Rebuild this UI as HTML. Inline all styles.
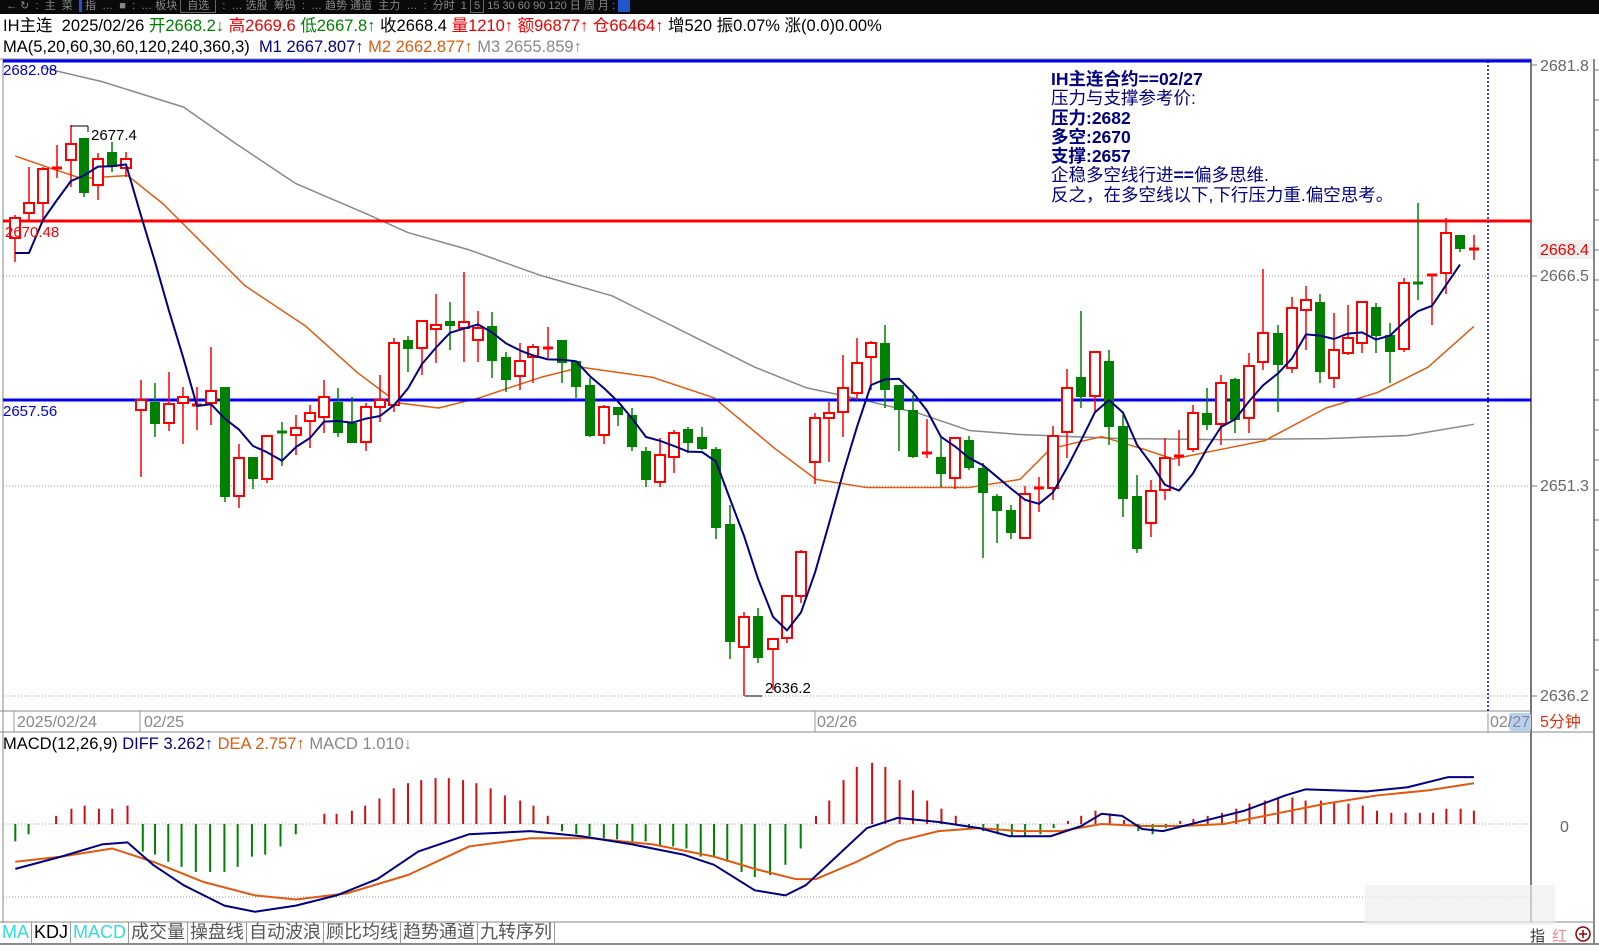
<!DOCTYPE html>
<html><head><meta charset="utf-8"><style>
*{margin:0;padding:0}
body{width:1599px;height:950px;background:#fff;overflow:hidden;position:relative;font-family:"Liberation Sans","Noto Sans CJK SC",sans-serif}
.t{position:absolute;white-space:nowrap;font-size:16.5px;line-height:19px}
#top{position:absolute;left:0;top:0;width:1599px;height:14px;background:#0a0a0a;color:#888;font-size:11px;line-height:12px;overflow:hidden}
.tabs{position:absolute;left:0;top:922px;height:21px;display:flex;font-size:18px;line-height:21px;font-family:"Liberation Sans","Noto Sans CJK SC",sans-serif}
.tabs div{border-right:1px solid #999;padding:0 2px;color:#555;height:21px}
</style></head><body>
<div id="top">&nbsp;&nbsp;← ↻ &nbsp;: &nbsp;主 &nbsp;菜 &nbsp;<span style="background:#2255cc;color:#fff">&nbsp;</span> 指 &nbsp;… &nbsp;■ &nbsp;: &nbsp;… 板块 <span style="border:1px solid #666;padding:0 6px">自选</span> &nbsp;: &nbsp;… 选股 &nbsp;筹码 &nbsp;: &nbsp;… 趋势 通道 &nbsp;主力 &nbsp;… &nbsp;: &nbsp;分时 &nbsp;1 <span style="border:1px solid #666">&nbsp;5&nbsp;</span> 15 30 60 90 120 日 周 月 : <span style="background:#2255cc">&nbsp;&nbsp;&nbsp;&nbsp;</span></div>
<div class="t" style="left:3px;top:17px">IH主连 &nbsp;2025/02/26 <span style="color:#008000">开2668.2↓</span> <span style="color:#e00">高2669.6</span> <span style="color:#008000">低2667.8↑</span> 收2668.4 <span style="color:#e00">量1210↑ 额96877↑ 仓66464↑</span> 增520 振0.07% 涨(0.0)0.00%</div>
<div class="t" style="left:3px;top:38px">MA(5,20,60,30,60,120,240,360,3) &nbsp;<span style="color:#000080">M1 2667.807↑</span> <span style="color:#e05a10">M2 2662.877↑</span> <span style="color:#888">M3 2655.859↑</span></div>
<div class="t" style="left:1051px;top:70px;color:#000080;font-size:17.5px;line-height:19.3px;font-weight:bold;font-family:'Liberation Sans','Noto Sans CJK SC',sans-serif">
<span>IH主连合约==02/27</span><br><span style="font-weight:normal">压力与支撑参考价:</span><br>压力:2682<br>多空:2670<br>支撑:2657<br><span style="font-weight:normal">企稳多空线行进</span>==<span style="font-weight:normal">偏多思维.</span><br><span style="font-weight:normal">反之，在多空线以下,下行压力重.偏空思考。</span></div>
<svg id="s" width="1599" height="950" style="position:absolute;left:0;top:0" xmlns="http://www.w3.org/2000/svg"></svg>
<div class="tabs"><div style="color:#3dd">MA</div><div style="color:#000">KDJ</div><div style="color:#3dd">MACD</div><div>成交量</div><div>操盘线</div><div>自动波浪</div><div>顾比均线</div><div>趋势通道</div><div>九转序列</div></div>
<script>
var C=[[15,218,238,215,262,'r'],[29,203,213,167,220,'r'],[43,169,203,167,220,'r'],[57,168,168,145,178,'r'],[71,144,160,125,187,'r'],[84,138,193,138,197,'g'],[98,159,185,153,200,'r'],[112,152,167,142,172,'g'],[126,159,168,152,177,'r'],
[141,400,410,380,477,'r'],[155,402,424,383,437,'g'],[169,404,423,372,431,'r'],[183,397,403,387,444,'r'],[197,405,405,387,430,'r'],[211,391,403,347,425,'r'],[225,387,497,387,502,'g'],[239,458,496,444,508,'r'],[253,457,479,457,489,'g'],[267,436,479,435,483,'r'],[282,432,434,422,466,'g'],[296,428,435,415,455,'r'],[310,413,421,405,448,'r'],[324,397,417,380,433,'r'],[338,402,433,388,437,'g'],[352,423,443,397,443,'g'],[366,407,442,403,451,'r'],[380,400,407,375,422,'r'],[394,343,405,338,412,'r'],[408,340,349,336,372,'g'],[422,321,348,320,375,'r'],[436,325,329,294,363,'r'],[450,321,326,302,350,'g'],[464,322,328,272,362,'r'],[478,328,340,311,362,'r'],[492,326,361,312,378,'g'],[506,357,380,352,392,'g'],[520,361,376,343,390,'r'],[533,347,357,344,383,'r'],[548,348,348,327,358,'r'],[562,340,363,340,383,'g'],[576,361,387,361,398,'g'],[590,385,436,378,437,'g'],[604,407,435,405,444,'r'],[618,407,415,407,426,'g'],[632,415,447,408,451,'g'],[646,451,480,447,487,'g'],[660,455,482,438,487,'r'],[674,433,457,430,473,'r'],[688,429,443,427,453,'g'],[702,437,449,427,450,'g'],[716,449,528,447,539,'g'],[730,524,642,505,659,'g'],[744,617,647,612,696,'r'],[758,616,658,608,663,'g'],[773,639,649,638,690,'r'],[787,596,638,595,643,'r'],[801,552,596,550,603,'r'],
[815,418,462,413,484,'r'],[829,413,418,402,462,'r'],[843,388,412,355,437,'r'],[857,363,393,338,400,'r'],[871,343,357,341,390,'r'],[885,343,390,325,408,'g'],[899,385,410,385,451,'g'],[913,410,457,395,458,'g'],[927,453,453,419,458,'r'],[941,457,474,437,487,'g'],[955,438,478,437,489,'r'],[969,440,468,436,470,'g'],[983,468,493,463,558,'g'],[997,496,511,494,543,'g'],[1011,510,533,505,539,'g'],[1025,494,538,486,539,'r'],[1039,488,488,477,512,'r'],[1053,436,488,426,500,'r'],[1067,388,432,369,458,'r'],[1081,377,397,311,408,'g'],[1095,352,396,351,412,'r'],[1109,361,427,350,445,'g'],[1123,426,499,415,517,'g'],[1137,496,549,475,553,'g'],[1151,491,523,480,537,'r'],[1165,458,490,438,500,'r'],[1179,456,456,430,466,'r'],[1193,413,449,405,452,'r'],[1207,413,425,388,430,'g'],[1221,383,424,375,445,'r'],[1235,379,420,378,433,'g'],[1249,366,418,353,433,'r'],[1263,333,362,269,370,'r'],[1278,333,365,325,412,'g'],[1292,308,368,297,373,'r'],[1306,300,310,286,350,'r'],[1320,302,372,294,383,'g'],[1334,350,378,313,388,'r'],[1348,338,353,305,355,'r'],[1362,302,343,302,353,'r'],[1376,307,336,303,353,'g'],[1390,335,352,323,383,'g'],[1404,283,349,278,352,'r'],[1418,283,283,203,300,'g'],[1432,275,275,275,325,'r'],[1446,233,273,218,294,'r'],[1460,235,249,235,252,'g'],[1474,249,249,235,260,'r']];
var s='';
function L(x1,y1,x2,y2,c,w,d){s+='<line x1="'+x1+'" y1="'+y1+'" x2="'+x2+'" y2="'+y2+'" stroke="'+c+'" stroke-width="'+(w||1)+'"'+(d?' stroke-dasharray="'+d+'"':'')+'/>';}
function T(x,y,t,c,fs,a){s+='<text x="'+x+'" y="'+y+'" fill="'+c+'" font-size="'+(fs||15)+'" font-family="Liberation Sans,Noto Sans CJK SC,sans-serif"'+(a?' text-anchor="'+a+'"':'')+'>'+t+'</text>';}
function P(pts,c,w){s+='<polyline fill="none" stroke="'+c+'" stroke-width="'+w+'" stroke-linejoin="round" points="'+pts.map(function(p){return p[0]+','+p[1]}).join(' ')+'"/>';}
L(0,59,1531,59,'#888');L(3,59,3,923,'#888');L(1531,59,1531,923,'#777',2);L(1594,59,1594,943,'#888',2);
L(0,711,1531,711,'#888');L(0,732,1594,732,'#888');L(0,922,1594,922,'#888');L(0,944,1599,944,'#888',2);
[276,486,696].forEach(function(y){L(3,y,1531,y,'#999',1,'1,2');L(1531,y,1537,y,'#777');});
L(1531,65,1537,65,'#777');
L(3,824,1531,824,'#999',1,'1,2');L(3,897,1531,897,'#999',1,'1,2');
for(var y=70;y<700;y+=30)L(1594,y,1599,y,'#777');
var f=function(a){return a.map(function(p){return[p[0]*1.02,p[1]*1.02]})};
P(f([[40,66],[100,80],[180,105],[230,140],[290,180],[360,210],[400,228],[460,245],[530,270],[600,290],[680,330],[740,360],[790,380],[850,393],[900,405],[950,422],[1000,426],[1100,430],[1200,431],[1300,430],[1380,427],[1445,416]]),'#888',1.5);
P(f([[15,153],[50,165],[80,175],[125,172],[160,200],[200,240],[240,280],[300,320],[350,365],[390,395],[430,400],[470,390],[530,370],[570,360],[640,370],[700,390],[760,440],[800,470],[850,478],[900,478],[950,478],[1000,470],[1030,440],[1080,428],[1120,440],[1150,450],[1200,440],[1240,432],[1300,400],[1350,385],[1400,360],[1445,320]]),'#e05a10',1.5);
L(3,61,1531,61,'#0000ee',3);L(3,221,1531,221,'#ff0000',3);L(3,400,1531,400,'#0000ee',3);
L(1488,61,1488,713,'#0000cc',1.5,'2,2');
C.forEach(function(c){var x=c[0],col=c[5]=='r'?'#f00':'#008000';
L(x,c[3],x,c[4],col,1.5);
if(c[1]==c[2]||c[2]-c[1]<3){L(x-5,c[1],x+5,c[1],col,3);}
else if(c[5]=='r'){s+='<rect x="'+(x-5)+'" y="'+c[1]+'" width="10" height="'+(c[2]-c[1])+'" fill="#fff" stroke="#f00" stroke-width="2"/>';}
else{s+='<rect x="'+(x-5)+'" y="'+c[1]+'" width="10" height="'+(c[2]-c[1])+'" fill="#008000"/>';}
});
var cl=C.map(function(c){return c[5]=='r'?c[1]:c[2]});var m=[];
for(var i=0;i<C.length-1;i++){var a=0,n=0;for(var j=Math.max(0,i-4);j<=i;j++){a+=cl[j];n++;}m.push([C[i][0],a/n]);}
var ov=[253,253,220,200,181];for(i=0;i<5;i++)m[i][1]=ov[i];
P(m,'#000080',2);
T(3,75,'2682.08','#0000cc');T(5,237,'2670.48','#f00');T(3,416,'2657.56','#0000cc');
L(71,126,88,126,'#000');L(88,126,88,132,'#000');T(91,140,'2677.4','#000');
L(745,696,762,696,'#000');T(765,693,'2636.2','#000');
[['2681.8',71],['2666.5',281],['2651.3',491],['2636.2',701]].forEach(function(a){T(1540,a[1],a[0],'#666',16);});
s+='<rect x="1537" y="240" width="56" height="19" fill="#f0f0f0"/>';T(1540,255,'2668.4','#e00',16);
T(1560,832,'0','#666',16);
L(140,711,140,732,'#999');L(14,711,14,732,'#999');L(815,711,815,732,'#999');L(1488,713,1488,732,'#999');
T(17,727,'2025/02/24','#888',16);T(144,727,'02/25','#888',16);T(817,727,'02/26','#888',16);
s+='<rect x="1509" y="713" width="22" height="18" rx="3" fill="#b8d0f0"/>';T(1490,727,'02/27','#888',16);
T(1540,727,'5分钟','#e03010',16);
var H=[[15,825],[28,818],[55,800],[70,793],[83,790],[97,793],[110,793],[125,790],[140,835],[152,838],[165,845],[178,850],[192,855],[206,855],[220,855],[233,850],[247,840],[260,838],[275,830],[290,818],[318,798],[330,798],[345,795],[358,790],[372,783],[386,773],[400,768],[413,765],[427,763],[440,763],[454,765],[467,768],[481,773],[495,780],[510,785],[523,790],[537,800],[551,815],[565,818],[578,820],[592,822],[605,823],[620,825],[633,825],[647,830],[660,830],[673,832],[687,840],[700,840],[713,845],[727,855],[740,860],[755,858],[770,848],[785,832],[800,800],[813,785],[827,765],[840,752],[855,748],[868,752],[882,765],[895,775],[909,785],[923,793],[937,800],[950,812],[964,815],[978,818],[992,820],[1005,820],[1020,818],[1033,812],[1047,805],[1060,800],[1074,795],[1088,798],[1102,804],[1116,815],[1130,818],[1143,812],[1157,805],[1170,803],[1184,800],[1198,797],[1212,793],[1225,788],[1240,785],[1253,783],[1267,782],[1280,785],[1295,785],[1308,787],[1322,788],[1336,790],[1350,795],[1364,797],[1378,797],[1392,797],[1405,797],[1418,793],[1432,793],[1445,795]];
H.forEach(function(h){var x=h[0]*1.02,y=824+(h[1]-808)*1.02;L(x,824,x,y,y<824?'#d01010':'#008000',2);});
var g=function(a){return a.map(function(p){return[p[0]*1.02,824+(p[1]-808)*1.02]})};
P(g([[15,845],[60,840],[110,832],[150,845],[200,865],[250,878],[290,882],[340,876],[400,858],[460,830],[520,822],[580,822],[640,828],[700,840],[740,852],[780,862],[800,862],[840,845],[880,825],[920,815],[960,812],[1000,815],[1040,815],[1080,808],[1120,810],[1160,810],[1200,808],[1250,798],[1300,788],[1350,780],[1400,775],[1445,768]]),'#e05a10',2);
P(g([[15,852],[60,840],[100,828],[125,826],[150,848],[180,868],[220,888],[250,894],[290,888],[330,878],[370,862],[410,835],[460,818],[520,815],[570,820],[620,828],[670,838],[700,848],[740,873],[770,878],[790,868],[820,840],[850,812],[880,802],[920,806],[960,812],[990,820],[1030,820],[1060,810],[1080,798],[1100,800],[1120,813],[1140,815],[1180,805],[1220,795],[1260,780],[1280,774],[1340,776],[1380,772],[1420,762],[1445,762]]),'#000080',2);
s+='<text x="3" y="749" font-size="16.5" font-family="Liberation Sans,sans-serif"><tspan fill="#000">MACD(12,26,9) </tspan><tspan fill="#000080"> DIFF 3.262↑ </tspan><tspan fill="#e05a10"> DEA 2.757↑ </tspan><tspan fill="#888"> MACD 1.010↓</tspan></text>';
s+='<rect x="1365" y="885" width="190" height="40" fill="#eee" opacity="0.7"/>';
T(1530,941,'指','#333',15);T(1552,941,'红','#e88',15);
s+='<circle cx="1583" cy="934" r="7" fill="none" stroke="#900" stroke-width="1.5"/>';L(1579,934,1587,934,'#900',1.5);L(1583,930,1583,938,'#900',1.5);
document.getElementById('s').innerHTML=s;
</script>
</body></html>
